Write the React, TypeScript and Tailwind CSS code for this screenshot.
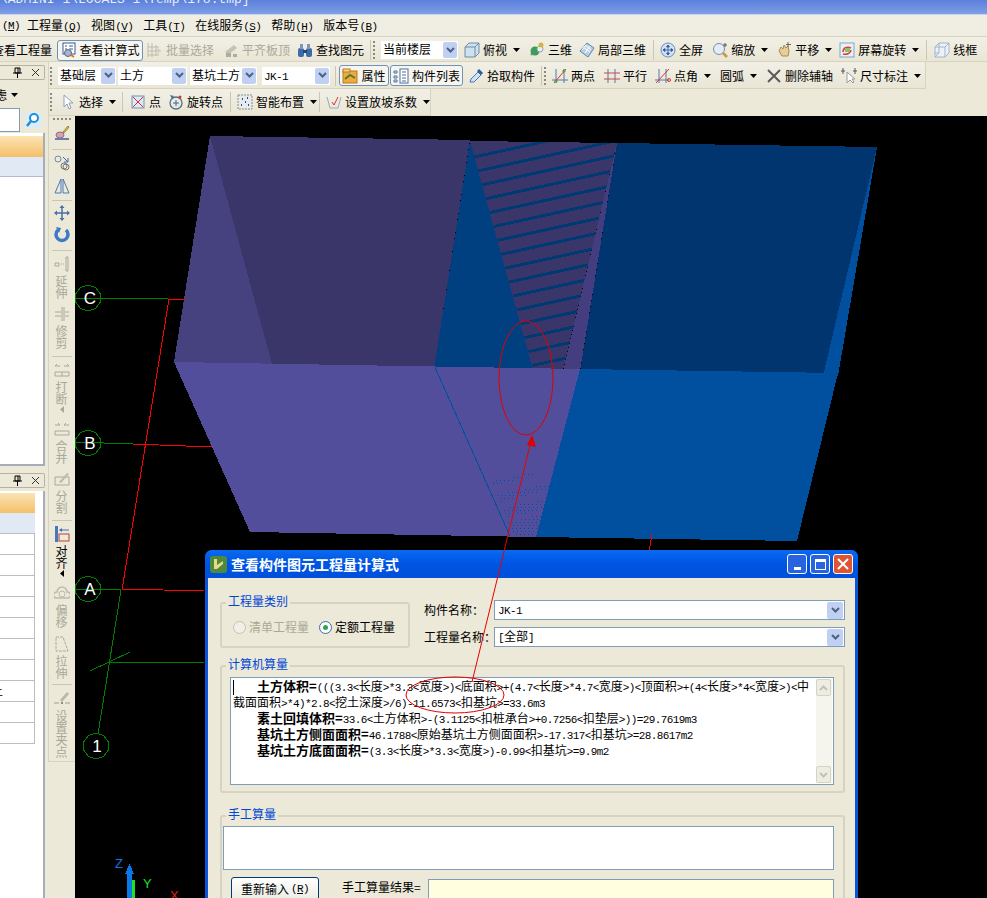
import React from "react";

const dotted = "bg-[radial-gradient(circle,#8a8878_1px,transparent_1.2px)] bg-[length:2px_4px]";
const barBg = "bg-gradient-to-b from-[#f2f0e6] to-[#e9e6d5]";
const latin = "font-['Liberation_Mono',monospace] text-[11px] tracking-[-0.6px]";

// latin glyphs sit on a 6px grid in the original, chinese on 12px
const Fm = ({ text }: { text: string }) => (
  <>
    {text.split(/([\u4e00-\u9fff]+)/).map((part, i) =>
      /[\u4e00-\u9fff]/.test(part) ? (
        <span key={i}>{part}</span>
      ) : (
        <span key={i} className={latin}>
          {part}
        </span>
      )
    )}
  </>
);

const Grip = ({ className = "" }: { className?: string }) => (
  <div className={`h-[20px] w-[2px] shrink-0 ${dotted} ${className}`} />
);

const Sep = ({ className = "" }: { className?: string }) => (
  <div className={`h-[20px] w-px shrink-0 bg-[#c9c6b4] ${className}`} />
);

const Caret = () => (
  <svg width="7" height="4" viewBox="0 0 7 4" className="ml-[3px] shrink-0">
    <path d="M0 0h7L3.5 4z" fill="#000" />
  </svg>
);

const S = ({ children }: { children: React.ReactNode }) => (
  <svg width="16" height="16" viewBox="0 0 16 16" fill="none" className="shrink-0">
    {children}
  </svg>
);

const icons: Record<string, React.ReactNode> = {
  calc: (
    <S>
      <rect x="2" y="1" width="12" height="11" fill="#fff" stroke="#3b5998" />
      <path d="M4 4h2M8 4h4M4 7h2M8 7h4" stroke="#3b5998" />
      <circle cx="7" cy="11" r="3.5" fill="#9fb6d8" stroke="#667" />
      <path d="M10 13l3 2" stroke="#d97a1e" strokeWidth="2" />
    </S>
  ),
  batch: (
    <S>
      <path d="M1 1v14M1 5h11M1 9h11M1 13h11M5 1v14M9 3v11" stroke="#bdbbad" />
      <path d="M10 6l5 3-3 1-1 3z" fill="#d0cebf" />
    </S>
  ),
  flat: (
    <S>
      <path d="M2 10l9-7 3 3-8 6z" fill="#c4c2b4" />
      <path d="M3 11h5v4H3zM10 12h4v3h-4z" fill="#aeac9e" />
    </S>
  ),
  find: (
    <S>
      <rect x="1" y="6" width="6" height="9" rx="2" fill="#3d6aa8" />
      <rect x="9" y="6" width="6" height="9" rx="2" fill="#3d6aa8" />
      <rect x="3" y="2" width="3" height="5" fill="#7f96b8" />
      <rect x="10" y="2" width="3" height="5" fill="#7f96b8" />
      <rect x="6" y="8" width="4" height="3" fill="#24477a" />
    </S>
  ),
  top: (
    <S>
      <path d="M1 5l4-4h10v10l-4 4H1z" fill="#cfe0ee" stroke="#6f8ca6" />
      <path d="M1 5h10v10M11 5l4-4" stroke="#6f8ca6" />
    </S>
  ),
  d3: (
    <S>
      <path d="M2 13L9 6" stroke="#6c8fb0" strokeWidth="2" />
      <circle cx="6" cy="9" r="4.5" fill="#3e9c5a" />
      <circle cx="11" cy="7" r="3" fill="#e8eef3" stroke="#8fa5b8" />
      <circle cx="12" cy="3" r="2.5" fill="#d7b23c" />
    </S>
  ),
  local: (
    <S>
      <path d="M1 9l7-8 7 5-6 9z" fill="#b9cfe6" stroke="#5e84ad" />
      <path d="M4 5l7 5M6 3l6 5M3 8l4-5M6 11l5-7" stroke="#fff" />
    </S>
  ),
  full: (
    <S>
      <circle cx="8" cy="8" r="7" fill="#d4e1f2" stroke="#6d8db8" />
      <path d="M8 3v10M3 8h10M8 3L6.5 5h3zM8 13l-1.5-2h3zM3 8l2-1.5v3zM13 8l-2-1.5v3z" stroke="#2f5c9c" fill="#2f5c9c" strokeWidth=".8" />
    </S>
  ),
  zoom: (
    <S>
      <circle cx="7" cy="7" r="5.5" fill="#e3edf7" stroke="#7b8ea6" />
      <path d="M11 11l4 4" stroke="#c99a3a" strokeWidth="2.5" />
      <path d="M13 1v4M11 3h4" stroke="#555" />
    </S>
  ),
  pan: (
    <S>
      <path d="M3 9l2-4 2 2 1-4 2 3 2-2 1 5-1 5H6z" fill="#e9cd94" stroke="#a58a55" />
      <path d="M12 0v5M10 2.5h5" stroke="#666" />
    </S>
  ),
  spin: (
    <S>
      <rect x="1" y="1" width="14" height="14" fill="#e5f0f8" stroke="#7ea6cc" />
      <path d="M4 10c0-4 4-6 8-4" stroke="#e0402a" strokeWidth="1.5" />
      <path d="M12 8c0 3-4 5-8 4" stroke="#e0402a" strokeWidth="1.5" />
      <rect x="6" y="6" width="5" height="4" fill="#8fbf6a" />
    </S>
  ),
  frame: (
    <S>
      <path d="M1 5l4-4h10v10l-4 4H1z" fill="#eef2f6" stroke="#9db4cf" />
      <path d="M1 5h10v10M11 5l4-4M5 1v10H1M5 11l-4 4" stroke="#9db4cf" />
    </S>
  ),
  attr: (
    <S>
      <rect x="1" y="3" width="14" height="12" fill="#f2a93c" stroke="#b57a1d" />
      <rect x="1" y="1" width="7" height="3" fill="#f7d38b" stroke="#b57a1d" />
      <path d="M3 11l5-4 5 3" stroke="#4d7c35" strokeWidth="2" />
    </S>
  ),
  list: (
    <S>
      <rect x="7" y="1" width="8" height="14" fill="#fff" stroke="#4d6fa0" />
      <path d="M9 4h4M9 7h4M9 10h4M9 13h4" stroke="#4d6fa0" />
      <path d="M1 3h3v2H1zM1 8h3v2H1zM1 12h3v2H1z" stroke="#4d6fa0" />
    </S>
  ),
  pick: (
    <S>
      <path d="M2 14l1-3 7-7 3 3-7 7z" fill="#cfe3f6" stroke="#4978b5" />
      <path d="M10 2l4 4" stroke="#2f5c9c" strokeWidth="3" />
    </S>
  ),
  two: (
    <S>
      <path d="M4 1v14M12 1v14M0 12h16" stroke="#5877ad" />
      <path d="M2 15L14 1" stroke="#d9352b" />
      <circle cx="4" cy="13" r="1.6" fill="#5f9a3a" />
      <circle cx="12" cy="3" r="1.6" fill="#5f9a3a" />
    </S>
  ),
  par: (
    <S>
      <path d="M4 1v14M11 1v14" stroke="#5877ad" />
      <path d="M0 5h16M0 11h16" stroke="#c8474a" />
    </S>
  ),
  ang: (
    <S>
      <path d="M4 1v14M11 1v14M0 12h14" stroke="#5877ad" />
      <path d="M1 15L14 1" stroke="#d9352b" />
      <circle cx="14" cy="12" r="1.5" stroke="#d9352b" />
    </S>
  ),
  del: (
    <S>
      <path d="M2 2l12 12M14 2L2 14" stroke="#5a5a5a" strokeWidth="2" />
    </S>
  ),
  dim: (
    <S>
      <path d="M0 3h4M12 3h4M2 0v6M14 0v6" stroke="#555" />
      <path d="M6 4v11l3-3 3 3 1-1-2-3h3z" fill="#fff" stroke="#999" />
    </S>
  ),
  sel: (
    <S>
      <path d="M4 1v12l3-3 2 5 2-1-2-5h4z" fill="#fff" stroke="#8fa0bc" />
    </S>
  ),
  pt: (
    <S>
      <rect x="2" y="2" width="12" height="12" fill="#dfe8f4" stroke="#7d8fb5" />
      <path d="M3 3l10 10M13 3L3 13" stroke="#c03a3a" />
    </S>
  ),
  rot: (
    <S>
      <circle cx="8" cy="9" r="6" stroke="#54708f" strokeWidth="1.3" />
      <path d="M8 6v6M5 9h6" stroke="#3866a8" />
      <path d="M2 1l4 1-2 3z" fill="#54708f" />
      <circle cx="12" cy="3" r="1.5" fill="#d9352b" />
    </S>
  ),
  smart: (
    <S>
      <rect x="1" y="1" width="14" height="14" fill="#e6ebf0" stroke="#8b8b80" strokeDasharray="2 1" />
      <path d="M5 5h1M10 4h1M8 8h1M4 11h1M11 11h1" stroke="#33507c" strokeWidth="2" />
    </S>
  ),
  slope: (
    <S>
      <path d="M1 3l3 11h8l3-11" stroke="#9aa7c4" />
      <path d="M6 8l2 3 4-8" stroke="#d9352b" />
    </S>
  ),
  brush: (
    <S>
      <path d="M1 14h14" stroke="#3f5f9a" strokeWidth="1.5" />
      <path d="M9 7l5-6 1 1-5 6z" fill="#e8c65a" stroke="#9a8533" />
      <ellipse cx="6" cy="10" rx="4" ry="3" fill="#d8a0b4" stroke="#8a7080" />
    </S>
  ),
  copy: (
    <S>
      <circle cx="4" cy="4" r="3" stroke="#6f8bb3" />
      <circle cx="10" cy="11" r="3" stroke="#777" />
      <circle cx="12" cy="12" r="3" stroke="#777" />
      <path d="M9 2l5 5M14 3v4h-4" stroke="#3f6aa8" />
    </S>
  ),
  mirror: (
    <S>
      <path d="M7 1v14H1zM9 1v14h6z" stroke="#4a78bd" />
    </S>
  ),
  move: (
    <S>
      <path d="M8 1v14M1 8h14" stroke="#4a6fa5" strokeWidth="1.5" />
      <path d="M8 0l2.5 3h-5zM8 16l2.5-3h-5zM0 8l3-2.5v5zM16 8l-3-2.5v5z" fill="#4a6fa5" />
    </S>
  ),
  turn: (
    <S>
      <path d="M4 3a6 6 0 1 0 8 0" stroke="#3f79c7" strokeWidth="3.5" />
      <path d="M2 0l5 1-2 5z" fill="#3f79c7" />
    </S>
  ),
  extend: (
    <S>
      <path d="M12 1h2v14h-2zM1 7h4v3H1z" stroke="#aaa89a" />
      <path d="M7 8h4" stroke="#aaa89a" strokeDasharray="1 1" />
    </S>
  ),
  trim: (
    <S>
      <path d="M8 1v14M10 1v14M1 6h6M1 10h6M11 6h4M11 10h4" stroke="#aaa89a" />
    </S>
  ),
  brk: (
    <S>
      <path d="M1 10h14v4H1zM8 10v4M1 4h5M10 4h5M1 4l2-2M15 4l-2-2" stroke="#aaa89a" />
    </S>
  ),
  join: (
    <S>
      <path d="M1 10h14v4H1zM1 4h5M10 4h5M6 4L4 2M10 4l2-2" stroke="#aaa89a" />
    </S>
  ),
  split: (
    <S>
      <path d="M1 6h14v8H1z" stroke="#aaa89a" />
      <path d="M5 11l8-9 2 1-8 9z" fill="#bcbaad" />
    </S>
  ),
  align: (
    <S>
      <rect x="1" y="0" width="3" height="16" fill="#4a75b8" />
      <rect x="5" y="8" width="10" height="7" stroke="#b5403c" />
      <path d="M6 4h9" stroke="#3f6fc0" />
      <path d="M5 4l3-2v4z" fill="#3f6fc0" />
    </S>
  ),
  offset: (
    <S>
      <path d="M2 13a3 3 0 0 1 1-6 5 5 0 0 1 10 0 3 3 0 0 1 1 6z" stroke="#bbb9ab" strokeWidth="1.5" />
      <circle cx="8" cy="9" r="3" stroke="#bbb9ab" />
    </S>
  ),
  stretch: (
    <S>
      <path d="M2 1h7l5 14H2z" stroke="#aaa89a" strokeDasharray="3 1" />
    </S>
  ),
  clip: (
    <S>
      <path d="M6 9l7-8 2 2-7 8z" fill="#b9b7a9" />
      <path d="M0 12h5M11 12h5" stroke="#a09e90" />
      <rect x="7" y="11" width="2" height="2" fill="#8c8a7c" />
    </S>
  ),
};

const Tool = ({
  icon,
  label,
  arrow,
  off,
  className = "",
}: {
  icon?: string;
  label: string;
  arrow?: boolean;
  off?: boolean;
  className?: string;
}) => (
  <div className={`flex shrink-0 items-center gap-[3px] ${off ? "text-[#aca899]" : "text-black"} ${className}`}>
    {icon && icons[icon]}
    <span className="whitespace-nowrap">{label}</span>
    {arrow && <Caret />}
  </div>
);

const Chevron = ({ className = "" }: { className?: string }) => (
  <div className={`flex h-[16px] w-[14px] shrink-0 items-center justify-center rounded-[2px] bg-[#bfd0f3] ${className}`}>
    <svg width="9" height="7" viewBox="0 0 9 7">
      <path d="M1 1l3.5 3.5L8 1" fill="none" stroke="#4d6185" strokeWidth="2" />
    </svg>
  </div>
);

const Combo = ({ text, className = "" }: { text: string; className?: string }) => (
  <div className={`flex h-[18px] shrink-0 items-center justify-between bg-white pl-[2px] pr-[1px] ${className}`}>
    <span className="whitespace-nowrap">
      <Fm text={text} />
    </span>
    <Chevron />
  </div>
);

const Toggle = ({ icon, label, className = "" }: { icon: string; label: string; className?: string }) => (
  <div className={`flex h-[21px] shrink-0 items-center justify-center gap-[3px] rounded-[3px] border border-[#6f93b8] bg-[#f6f5ee] ${className}`}>
    {icons[icon]}
    <span className="whitespace-nowrap">{label}</span>
  </div>
);

const MenuItem = ({ label, hot, className = "" }: { label: string; hot: string; className?: string }) => (
  <span className={`whitespace-nowrap ${className}`}>
    {label}
    <span className={latin}>
      (<span className="underline">{hot}</span>)
    </span>
  </span>
);

const vItems: { icon?: string; text?: string; sep?: boolean; on?: boolean; more?: boolean; cls: string }[] = [
  { icon: "brush", cls: "mt-[5px]" },
  { sep: true, cls: "mt-[8px]" },
  { icon: "copy", cls: "mt-[5px]" },
  { icon: "mirror", cls: "mt-[7px]" },
  { sep: true, cls: "mt-[6px]" },
  { icon: "move", cls: "mt-[4px]" },
  { icon: "turn", cls: "mt-[6px]" },
  { sep: true, cls: "mt-[7px]" },
  { icon: "extend", text: "延伸", cls: "mt-[5px]" },
  { icon: "trim", text: "修剪", cls: "mt-[7px]" },
  { sep: true, cls: "mt-[7px]" },
  { icon: "brk", text: "打断", more: true, cls: "mt-[5px]" },
  { icon: "join", text: "合并", cls: "mt-[8px]" },
  { icon: "split", text: "分割", cls: "mt-[7px]" },
  { sep: true, cls: "mt-[6px]" },
  { icon: "align", text: "对齐", on: true, more: true, cls: "mt-[5px]" },
  { icon: "offset", text: "偏移", cls: "mt-[8px]" },
  { icon: "stretch", text: "拉伸", cls: "mt-[8px]" },
  { sep: true, cls: "mt-[5px]" },
  { icon: "clip", text: "设置夹点", cls: "mt-[6px]" },
];

const VToolbar = () => (
  <div className="flex h-[646px] w-[27px] shrink-0 flex-col items-center border-b border-l border-[#d6d3c0] bg-[#ece9d8]">
    <div className={`mt-[2px] h-[2px] w-[20px] shrink-0 ${dotted} bg-[length:4px_2px]`} />
    {vItems.map((it, i) =>
      it.sep ? (
        <div key={i} className={`h-px w-[20px] shrink-0 bg-[#c9c6b4] ${it.cls}`} />
      ) : (
        <div key={i} className={`flex shrink-0 flex-col items-center ${it.cls}`}>
          {icons[it.icon as string]}
          {it.text && (
            <span
              className={`mt-[3px] -ml-[2px] w-[12px] leading-[12px] [writing-mode:vertical-rl] ${it.on ? "text-black" : "text-[#a9a797]"}`}
            >
              {it.text}
            </span>
          )}
          {it.more && (
            <svg width="4" height="7" viewBox="0 0 4 7" className="mt-[1px]">
              <path d="M4 0v7L0 3.5z" fill={it.on ? "#000" : "#a9a797"} />
            </svg>
          )}
        </div>
      )
    )}
  </div>
);

const PanelHead = ({ className = "" }: { className?: string }) => (
  <div className={`flex h-[15px] w-[45px] shrink-0 items-center justify-end gap-[9px] rounded-r-[2px] border-y border-r border-[#b5b29f] pr-[4px] ${className}`}>
    <svg width="9" height="11" viewBox="0 0 9 11">
      <path d="M2 1h5v5H2zM0 6h9M4.500 6v5M5 1v5" fill="none" stroke="#000" />
    </svg>
    <svg width="9" height="9" viewBox="0 0 9 9">
      <path d="M1 1l7 7M8 1L1 8" stroke="#333" />
    </svg>
  </div>
);

const LeftPanel = () => (
  <div className="flex w-[48px] shrink-0 flex-col">
    <PanelHead className="mt-[3px]" />
    <div className="mt-[2px] flex h-[25px] w-[45px] items-center overflow-hidden">
      <span className="-ml-[5px] whitespace-nowrap">虑</span>
      <svg width="7" height="4" viewBox="0 0 7 4" className="ml-[4px]">
        <path d="M0 0h7L3.5 4z" fill="#000" />
      </svg>
    </div>
    <div className="flex h-[25px] w-[45px] items-center">
      <div className="h-[24px] w-[20px] border-y border-r border-[#7f9db9] bg-white" />
      <svg width="16" height="16" viewBox="0 0 16 16" className="ml-[5px]">
        <rect width="16" height="16" fill="#dcebf8" />
        <circle cx="9" cy="6" r="4" fill="#fff" stroke="#1e8fd5" strokeWidth="2" />
        <path d="M6 9l-4 5" stroke="#1e8fd5" strokeWidth="2.5" />
      </svg>
    </div>
    <div className="mt-[1px] h-[333px] w-[45px] border-r-2 border-b-2 border-[#a5adb8] bg-white pt-[3px]">
      <div className="h-[21px] bg-gradient-to-b from-[#fbe4b4] to-[#f4c069]" />
      <div className="h-[20px] border-b border-[#b4bccb] bg-[#e1e9f5]" />
    </div>
    <PanelHead className="mt-[7px]" />
    <div className="mt-[3px] w-[45px] flex-1 border-r-2 border-[#a5adb8] bg-white pt-[2px]">
      <div className="h-[20px] w-[35px] bg-gradient-to-b from-[#fbe4b4] to-[#f4c069]" />
      <div className="h-[21px] w-[35px] border-b border-[#bdbdbd] bg-[#e1e9f5]" />
      {Array.from({ length: 10 }).map((_, i) => (
        <div key={i} className="flex h-[21px] w-[35px] items-center overflow-hidden border-b border-r border-[#bdbdbd]">
          {i === 7 && <span className="-ml-[9px]">土</span>}
        </div>
      ))}
    </div>
  </div>
);

const fits = (n: number) => (n * 9301 + 49297) % 233280;

const Moire = () => {
  const dots: React.ReactNode[] = [];
  for (let y = 474; y < 537; y += 3) {
    for (let x = 476; x < 556; x += 4) {
      const left = 434 + ((y - 365) * 76) / 172;
      const right = 580 - ((y - 369) * 44) / 168;
      const chance = (y - 462) / 70;
      if (x > left + 4 && x < right - 1 && fits(x * 31 + y * 7) / 233280 < chance) {
        dots.push(<rect key={`${x}-${y}`} x={x + (y % 2)} y={y} width="1" height="1" fill="#00509f" />);
      }
    }
  }
  return <>{dots}</>;
};

const stripes = Array.from({ length: 16 }).map((_, i) => {
  const y = 157 + i * 13.9;
  const x = 470 + ((y - 142) * 63) / 226;
  return { x, y };
});

// axis bubbles are drawn as rough ten sided rings in the original
const ring = (cx: number, cy: number) =>
  Array.from({ length: 10 })
    .map((_, i) => {
      const a = (Math.PI / 5) * i + Math.PI / 10;
      return `${(cx + 13 * Math.cos(a)).toFixed(1)},${(cy + 13 * Math.sin(a)).toFixed(1)}`;
    })
    .join(" ");

const Scene = () => (
  <svg viewBox="75 116 912 782" width="912" height="782" className="absolute inset-0" shapeRendering="crispEdges">
    <clipPath id="hatch">
      <polygon points="470,141 617,143 563,370 533,370" />
    </clipPath>
    <polygon points="210,136 470,140 434,369 273,368" fill="#3a3669" />
    <polygon points="210,136 273,368 174,362" fill="#46417f" />
    <polygon points="470,141 533,370 434,369" fill="#004080" />
    <polygon points="470,141 617,143 563,370 533,370" fill="#3a3669" />
    <g clipPath="url(#hatch)">
      {stripes.map((s, i) => (
        <line key={i} x1={s.x} y1={s.y} x2={s.x + 160} y2={s.y - 35} stroke="#003a75" strokeWidth="3" />
      ))}
    </g>
    <polygon points="617,143 580,371 563,371" fill="#443d80" />
    <polygon points="617,143 877,147 823,376 580,372" fill="#00356f" />
    <polygon points="877,147 838,376 823,376" fill="#00509f" />
    <polygon points="174,362 580,369 536,537 250,532" fill="#534e9b" />
    <polygon points="580,369 838,373 797,541 536,537" fill="#00509f" />
    <line x1="434" y1="365" x2="510" y2="536" stroke="#00509f" />
    <Moire />

    {/* axis grid */}
    <g fill="none" strokeWidth="1">
      <polyline points="75,298 168,299" stroke="#008000" />
      <polyline points="168,299 185,299" stroke="#ff0000" />
      <polyline points="75,442 133,444" stroke="#008000" />
      <polyline points="133,444 212,447" stroke="#ff0000" />
      <polyline points="75,589 121,590" stroke="#008000" />
      <polyline points="122,589 204,591" stroke="#ff0000" />
      <line x1="169" y1="299" x2="122" y2="590" stroke="#ff0000" />
      <line x1="121" y1="590" x2="98" y2="734" stroke="#008000" />
      <line x1="90" y1="671" x2="130" y2="652" stroke="#008000" />
      <polyline points="110,662 204,663" stroke="#008000" />
      <line x1="652" y1="534" x2="649" y2="552" stroke="#ff0000" />
      {[
        [88, 298],
        [88, 443],
        [88, 589],
        [96, 746],
      ].map(([cx, cy], i) => (
        <polygon key={i} stroke="#008000" points={ring(cx, cy)} />
      ))}
    </g>
    <g fill="#fff" fontFamily="'Liberation Sans', sans-serif" fontSize="17" textAnchor="middle" shapeRendering="auto">
      <text x="90" y="304">C</text>
      <text x="90" y="449">B</text>
      <text x="90" y="595">A</text>
      <text x="97" y="752">1</text>
    </g>

    {/* coordinate marker */}
    <rect x="127" y="872" width="5" height="26" fill="#0a78e6" />
    <polygon points="129.500,864 134,874 125,874" fill="#0a78e6" />
    <rect x="132" y="880" width="3" height="18" fill="#22e022" />
    <g fontFamily="'Liberation Sans', sans-serif" fontSize="13">
      <text x="115" y="868" fill="#0a78e6">Z</text>
      <text x="143" y="888" fill="#22e022">Y</text>
      <text x="170" y="900" fill="#e02020">X</text>
    </g>
  </svg>
);

const Marks = () => (
  <svg viewBox="75 116 912 782" width="912" height="782" className="pointer-events-none absolute inset-0 z-10">
    <ellipse cx="526" cy="378" rx="27" ry="57" fill="none" stroke="#e00000" />
    <ellipse cx="455" cy="695" rx="49" ry="18" fill="none" stroke="#e00000" />
    <line x1="532" y1="437" x2="472" y2="682" stroke="#e80000" />
    <polygon points="532,435 536,447 527,445" fill="#e00000" />
  </svg>
);

const Legend = ({ text }: { text: string }) => (
  <span className="absolute -top-[10px] left-[4px] bg-[#ece9d8] px-[2px] leading-[14px] text-[#0046d5]">{text}</span>
);

const DialogCombo = ({ text, className = "" }: { text: string; className?: string }) => (
  <div className={`flex h-[20px] w-[351px] items-center justify-between border border-[#7f9db9] bg-white pl-[3px] pr-[1px] ${className}`}>
    <span>
      <Fm text={text} />
    </span>
    <Chevron className="h-[17px] w-[16px]" />
  </div>
);

const FormulaLine = ({ head, text, pl }: { head?: string; text: string; pl?: boolean }) => (
  <div className={`h-[16px] whitespace-nowrap leading-[16px] ${pl ? "pl-[24px]" : ""}`}>
    {head && <span className="text-[13px] font-bold">{head}</span>}
    <Fm text={text} />
  </div>
);

const WinBtn = ({ children, className = "" }: { children: React.ReactNode; className?: string }) => (
  <div className={`flex h-[20px] w-[20px] items-center justify-center rounded-[3px] border border-white ${className}`}>
    {children}
  </div>
);

const ScrollBtn = ({ up }: { up?: boolean }) => (
  <div className="flex h-[17px] w-[15px] items-center justify-center rounded-[2px] border border-[#d6d3c0] bg-[#eeede4]">
    <svg width="9" height="6" viewBox="0 0 9 6">
      <path d={up ? "M1 5l3.5-3.500L8 5" : "M1 1l3.500 3.500L8 1"} fill="none" stroke="#c4c2b4" strokeWidth="2" />
    </svg>
  </div>
);

const Dialog = () => (
  <div className="absolute left-[130px] top-[434px] h-[380px] w-[653px] overflow-hidden rounded-t-[7px] bg-[#0b53dd]">
    <div className="flex h-[28px] items-center bg-gradient-to-b from-[#0a6af0] via-[#0054e3] to-[#0050d8] pl-[5px] pr-[5px]">
      <svg width="17" height="17" viewBox="0 0 17 17" className="shrink-0">
        <rect width="17" height="17" rx="3" fill="#4f8a3c" />
        <path d="M4 3h3v6l6-4v3l-6 5H4z" fill="#e5d98a" />
      </svg>
      <span className="ml-[4px] text-[14px] font-bold text-white">查看构件图元工程量计算式</span>
      <div className="ml-auto flex gap-[3px]">
        <WinBtn className="bg-[#2a63e0]">
          <div className="mt-[9px] h-[3px] w-[7px] bg-white" />
        </WinBtn>
        <WinBtn className="bg-[#2a63e0]">
          <div className="h-[11px] w-[11px] border border-t-[3px] border-white" />
        </WinBtn>
        <WinBtn className="bg-[#df5533]">
          <svg width="12" height="12" viewBox="0 0 12 12">
            <path d="M1 1l10 10M11 1L1 11" stroke="#fff" strokeWidth="2" />
          </svg>
        </WinBtn>
      </div>
    </div>
    <div className="mx-[3px] h-[352px] bg-[#ece9d8] pl-[12px] pr-[10px] pt-[22px]">
      <div className="flex">
        <div className="relative mt-[2px] flex h-[46px] w-[190px] items-center gap-[3px] rounded-[3px] border-2 border-[#d6d3c0] pl-[11px] pt-[4px]">
          <Legend text="工程量类别" />
          <span className="h-[13px] w-[13px] rounded-full border border-[#c5c2b2] bg-[#f2f0e6]" />
          <span className="text-[#aca899]">清单工程量</span>
          <span className="ml-[7px] flex h-[13px] w-[13px] items-center justify-center rounded-full border border-[#3a6ea5] bg-white">
            <span className="h-[5px] w-[5px] rounded-full bg-[#2fa84a]" />
          </span>
          <span>定额工程量</span>
        </div>
        <div className="ml-[14px] flex flex-col gap-[7px]">
          <div className="flex items-center">
            <span className="w-[70px]">构件名称：</span>
            <DialogCombo text="JK-1" />
          </div>
          <div className="flex items-center">
            <span className="w-[70px] whitespace-nowrap">工程量名称：</span>
            <DialogCombo text="[全部]" />
          </div>
        </div>
      </div>

      <div className="relative mt-[17px] h-[128px] rounded-[3px] border-2 border-[#d6d3c0] pl-[8px] pt-[10px]">
        <Legend text="计算机算量" />
        <div className="relative flex h-[108px] w-[604px] border border-[#7f9db9] bg-white">
          <div className="absolute left-[2px] top-[2px] h-[15px] w-px bg-black" />
          <div className="flex-1 overflow-hidden pl-[2px]">
            <FormulaLine pl head="土方体积=" text="(((3.3<长度>*3.3<宽度>)<底面积>+(4.7<长度>*4.7<宽度>)<顶面积>+(4<长度>*4<宽度>)<中" />
            <FormulaLine text="截面面积>*4)*2.8<挖土深度>/6)-11.6573<扣基坑>=33.6m3" />
            <FormulaLine pl head="素土回填体积=" text="33.6<土方体积>-(3.1125<扣桩承台>+0.7256<扣垫层>))=29.7619m3" />
            <FormulaLine pl head="基坑土方侧面面积=" text="46.1788<原始基坑土方侧面面积>-17.317<扣基坑>=28.8617m2" />
            <FormulaLine pl head="基坑土方底面面积=" text="(3.3<长度>*3.3<宽度>)-0.99<扣基坑>=9.9m2" />
          </div>
          <div className="mb-[1px] mr-[1px] mt-[1px] flex w-[16px] flex-col justify-between bg-[#f5f4ed]">
            <ScrollBtn up />
            <ScrollBtn />
          </div>
        </div>
      </div>

      <div className="relative mt-[22px] h-[100px] rounded-[3px] border-2 border-[#d6d3c0] pt-[9px]">
        <Legend text="手工算量" />
        <div className="ml-[1px] h-[44px] w-[611px] border border-[#7f9db9] bg-white" />
        <div className="mt-[7px] flex items-start pl-[9px]">
          <div className="flex h-[24px] w-[88px] items-center justify-center rounded-[3px] border border-[#003c74] bg-gradient-to-b from-white to-[#ecebe3]">
            重新输入
            <span className={`ml-[2px] ${latin}`}>
              (<span className="underline">R</span>)
            </span>
          </div>
          <span className="ml-[23px] mt-[2px] w-[86px] whitespace-nowrap">手工算量结果=</span>
          <div className="mt-[2px] h-[22px] w-[406px] border border-[#7f9db9] bg-[#ffffe0]" />
        </div>
      </div>
    </div>
  </div>
);

const Canvas = () => (
  <div className="relative h-[782px] w-[912px] shrink-0 overflow-hidden bg-black">
    <Scene />
    <Dialog />
    <Marks />
  </div>
);

export default function App() {
  return (
    <div className="flex h-[898px] w-[987px] flex-col overflow-hidden bg-[#ece9d8] font-['Noto_Sans_CJK_SC','Liberation_Sans',sans-serif] text-[12px] leading-[16px] text-black">
      {/* title bar */}
      <div className="h-[15px] shrink-0 overflow-hidden border-b border-[#c8d4ee] bg-gradient-to-b from-[#5c80dc] to-[#7f9ee6]">
        <div className="-mt-[8px] whitespace-nowrap font-['Liberation_Mono',monospace] text-[13px] leading-[16px] text-[#e8ecf8]">
          \ADMINI~1\LOCALS~1\Temp\178.tmp]
        </div>
      </div>

      {/* menu */}
      <div className="flex h-[21px] shrink-0 items-center bg-[#f0eee2] pt-[1px]">
        <span className={`ml-[2px] ${latin}`}>
          (<span className="underline">M</span>)
        </span>
        <MenuItem label="工程量" hot="Q" className="ml-[7px]" />
        <MenuItem label="视图" hot="V" className="ml-[10px]" />
        <MenuItem label="工具" hot="T" className="ml-[10px]" />
        <MenuItem label="在线服务" hot="S" className="ml-[10px]" />
        <MenuItem label="帮助" hot="H" className="ml-[10px]" />
        <MenuItem label="版本号" hot="B" className="ml-[10px]" />
      </div>

      {/* main toolbar */}
      <div className={`flex h-[26px] w-[987px] shrink-0 items-center border-y border-[#d6d3c0] pt-[2px] ${barBg}`}>
        <span className="-ml-[8px] shrink-0 whitespace-nowrap">查看工程量</span>
        <Toggle icon="calc" label="查看计算式" className="ml-[5px] w-[86px]" />
        <Tool off icon="batch" label="批量选择" className="ml-[4px]" />
        <Tool off icon="flat" label="平齐板顶" className="ml-[9px]" />
        <Tool icon="find" label="查找图元" className="ml-[7px]" />
        <Sep className="ml-[6px]" />
        <Grip className="ml-[2px]" />
        <Combo text="当前楼层" className="ml-[6px] w-[77px]" />
        <Tool icon="top" label="俯视" arrow className="ml-[6px]" />
        <Tool icon="d3" label="三维" className="ml-[9px]" />
        <Tool icon="local" label="局部三维" className="ml-[7px]" />
        <Sep className="ml-[7px]" />
        <Tool icon="full" label="全屏" className="ml-[6px]" />
        <Tool icon="zoom" label="缩放" arrow className="ml-[9px]" />
        <Tool icon="pan" label="平移" arrow className="ml-[8px]" />
        <Tool icon="spin" label="屏幕旋转" arrow className="ml-[7px]" />
        <Sep className="ml-[7px]" />
        <Tool icon="frame" label="线框" className="ml-[7px]" />
      </div>

      <div className="flex min-h-0 flex-1">
        <LeftPanel />
        <div className="flex w-[939px] flex-col">
          {/* component toolbar */}
          <div className={`flex h-[27px] w-[878px] shrink-0 items-center border-b border-l border-r border-[#d6d3c0] pl-[1px] pt-[1px] ${barBg}`}>
            <Grip />
            <Combo text="基础层" className="ml-[6px] w-[58px]" />
            <Combo text="土方" className="ml-[2px] w-[69px]" />
            <Combo text="基坑土方" className="ml-[3px] w-[67px]" />
            <Combo text="JK-1" className="ml-[5px] w-[68px]" />
            <Sep className="ml-[5px]" />
            <Toggle icon="attr" label="属性" className="ml-[3px] w-[50px]" />
            <Toggle icon="list" label="构件列表" className="ml-[1px] w-[73px]" />
            <Tool icon="pick" label="拾取构件" className="ml-[5px]" />
            <Sep className="ml-[6px]" />
            <Grip className="ml-[2px]" />
            <Tool icon="two" label="两点" className="ml-[6px]" />
            <Tool icon="par" label="平行" className="ml-[9px]" />
            <Tool icon="ang" label="点角" arrow className="ml-[8px]" />
            <Tool label="圆弧" arrow className="ml-[9px]" />
            <Tool icon="del" label="删除辅轴" className="ml-[9px]" />
            <Tool icon="dim" label="尺寸标注" arrow className="ml-[8px]" />
          </div>

          {/* draw toolbar */}
          <div className={`flex h-[27px] w-[383px] shrink-0 items-center border-b border-l border-r border-[#d6d3c0] pl-[1px] ${barBg}`}>
            <Grip />
            <Tool icon="sel" label="选择" arrow className="ml-[8px]" />
            <Sep className="ml-[6px]" />
            <Tool icon="pt" label="点" className="ml-[7px]" />
            <Tool icon="rot" label="旋转点" className="ml-[7px]" />
            <Sep className="ml-[7px]" />
            <Tool icon="smart" label="智能布置" arrow className="ml-[6px]" />
            <Sep className="ml-[2px]" />
            <Tool icon="slope" label="设置放坡系数" arrow className="ml-[6px]" />
          </div>

          <div className="flex min-h-0 flex-1 items-start">
            <VToolbar />
            <Canvas />
          </div>
        </div>
      </div>
    </div>
  );
}
